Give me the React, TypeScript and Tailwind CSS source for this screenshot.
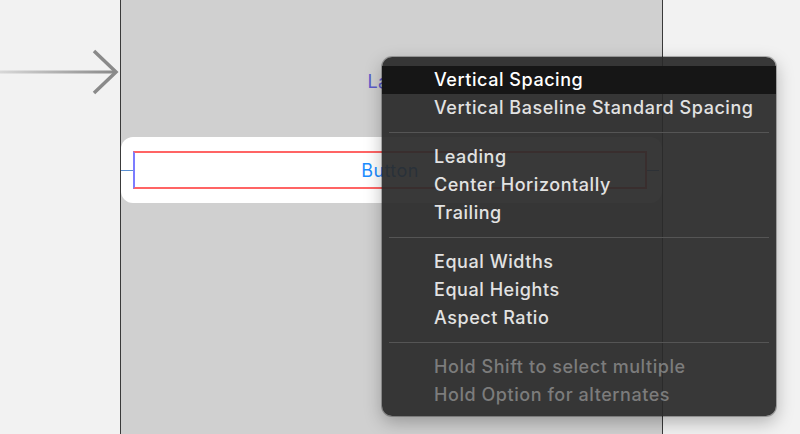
import React from "react";

const font = { fontFamily: "Inter, 'Noto Sans', sans-serif" };

type Item = { label: string; active?: boolean; disabled?: boolean };

const groups: Item[][] = [
  [{ label: "Vertical Spacing", active: true }, { label: "Vertical Baseline Standard Spacing" }],
  [{ label: "Leading" }, { label: "Center Horizontally" }, { label: "Trailing" }],
  [{ label: "Equal Widths" }, { label: "Equal Heights" }, { label: "Aspect Ratio" }],
  [
    { label: "Hold Shift to select multiple", disabled: true },
    { label: "Hold Option for alternates", disabled: true },
  ],
];

function Arrow() {
  return (
    <svg width="120" height="60" viewBox="0 0 120 60" className="block">
      <defs>
        <linearGradient id="shaft" x1="0" x2="1" y1="0" y2="0">
          <stop offset="0" stopColor="#d8d8d8" />
          <stop offset="1" stopColor="#8a8a8a" />
        </linearGradient>
      </defs>
      <rect x="0" y="28.5" width="114" height="3" fill="url(#shaft)" />
      <path d="M94 9 L116 30 L94 51" fill="none" stroke="#8a8a8a" strokeWidth="3.5" />
    </svg>
  );
}

function Menu() {
  return (
    <div
      className="absolute left-[382px] top-[57px] w-[394px] rounded-[10px] bg-[rgba(42,42,42,0.93)] pt-[9px] pb-[7px] shadow-[0_6px_18px_rgba(0,0,0,0.28)] ring-1 ring-[rgba(0,0,0,0.25)]"
      style={font}
    >
      {groups.map((g, gi) => (
        <div key={gi}>
          {gi > 0 && (
            <div className="py-[10px]">
              <div className="mx-[7px] h-px bg-[#555555]" />
            </div>
          )}
          {g.map((it) => (
            <div
              key={it.label}
              className={
                "flex h-[28px] items-center pl-[52px] text-[18px] font-medium leading-none tracking-[0.55px] " +
                (it.active
                  ? "bg-[#161616] text-white"
                  : it.disabled
                  ? "text-[#7c7c7c]"
                  : "text-[#e2e2e2]")
              }
            >
              {it.label}
            </div>
          ))}
        </div>
      ))}
    </div>
  );
}

export default function App() {
  return (
    <div className="relative flex h-[434px] w-[800px] overflow-hidden bg-[#f2f2f2]" style={font}>
      <div className="w-[120px] shrink-0 pt-[42px]">
        <Arrow />
      </div>
      <div className="flex w-[543px] shrink-0 flex-col border-x border-[#3a3a3a] bg-[#d0d0d0]">
        <div className="h-[68px]" />
        <div className="text-center text-[18px] leading-[28px] tracking-[0.4px] text-[#5b5bc9]">Label</div>
        <div className="h-[41px]" />
        <div className="flex h-[66px] items-center rounded-[12px] bg-white">
          <div className="h-px w-[12px] bg-[#5a8fd2]" />
          <div className="flex h-[38px] w-[514px] items-center justify-center border-y-2 border-r-2 border-l-2 border-y-[#ff6464] border-r-[#ff6464] border-l-[#7c7cff] text-[18px] tracking-[0.4px] text-[#1b8cff]">
            Button
          </div>
          <div className="h-px w-[12px] bg-[#5a8fd2]" />
        </div>
      </div>
      <div className="flex-1" />
      <Menu />
    </div>
  );
}
